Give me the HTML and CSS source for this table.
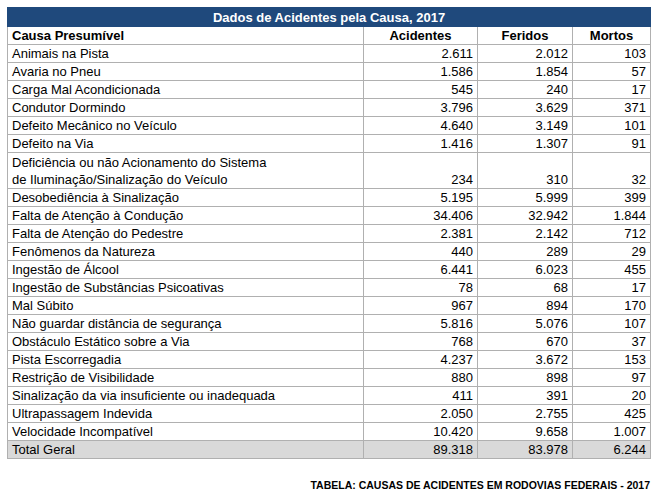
FILE: index.html
```html
<!DOCTYPE html>
<html lang="pt-BR">
<head>
<meta charset="utf-8">
<title>Dados de Acidentes pela Causa, 2017</title>
<link rel="stylesheet" href="styles.css">
</head>
<body>
<div class="page">
  <table class="data">
    <colgroup>
      <col class="c-cause">
      <col class="c-num1">
      <col class="c-num2">
      <col class="c-num3">
    </colgroup>
    <thead>
      <tr class="title-row"><th colspan="4">Dados de Acidentes pela Causa, 2017</th></tr>
      <tr class="head-row">
        <th class="left">Causa Presumível</th>
        <th>Acidentes</th>
        <th>Feridos</th>
        <th>Mortos</th>
      </tr>
    </thead>
    <tbody>
      <tr><td>Animais na Pista</td><td>2.611</td><td>2.012</td><td>103</td></tr>
      <tr><td>Avaria no Pneu</td><td>1.586</td><td>1.854</td><td>57</td></tr>
      <tr><td>Carga Mal Acondicionada</td><td>545</td><td>240</td><td>17</td></tr>
      <tr><td>Condutor Dormindo</td><td>3.796</td><td>3.629</td><td>371</td></tr>
      <tr><td>Defeito Mecânico no Veículo</td><td>4.640</td><td>3.149</td><td>101</td></tr>
      <tr><td>Defeito na Via</td><td>1.416</td><td>1.307</td><td>91</td></tr>
      <tr class="double"><td>Deficiência ou não Acionamento do Sistema<br>de Iluminação/Sinalização do Veículo</td><td>234</td><td>310</td><td>32</td></tr>
      <tr><td>Desobediência à Sinalização</td><td>5.195</td><td>5.999</td><td>399</td></tr>
      <tr><td>Falta de Atenção à Condução</td><td>34.406</td><td>32.942</td><td>1.844</td></tr>
      <tr><td>Falta de Atenção do Pedestre</td><td>2.381</td><td>2.142</td><td>712</td></tr>
      <tr><td>Fenômenos da Natureza</td><td>440</td><td>289</td><td>29</td></tr>
      <tr><td>Ingestão de Álcool</td><td>6.441</td><td>6.023</td><td>455</td></tr>
      <tr><td>Ingestão de Substâncias Psicoativas</td><td>78</td><td>68</td><td>17</td></tr>
      <tr><td>Mal Súbito</td><td>967</td><td>894</td><td>170</td></tr>
      <tr><td>Não guardar distância de segurança</td><td>5.816</td><td>5.076</td><td>107</td></tr>
      <tr><td>Obstáculo Estático sobre a Via</td><td>768</td><td>670</td><td>37</td></tr>
      <tr><td>Pista Escorregadia</td><td>4.237</td><td>3.672</td><td>153</td></tr>
      <tr><td>Restrição de Visibilidade</td><td>880</td><td>898</td><td>97</td></tr>
      <tr><td>Sinalização da via insuficiente ou inadequada</td><td>411</td><td>391</td><td>20</td></tr>
      <tr><td>Ultrapassagem Indevida</td><td>2.050</td><td>2.755</td><td>425</td></tr>
      <tr><td>Velocidade Incompatível</td><td>10.420</td><td>9.658</td><td>1.007</td></tr>
      <tr class="total"><td>Total Geral</td><td>89.318</td><td>83.978</td><td>6.244</td></tr>
    </tbody>
  </table>
  <p class="caption">TABELA: CAUSAS DE ACIDENTES EM RODOVIAS FEDERAIS - 2017</p>
</div>
</body>
</html>
```

FILE: styles.css
```css
html, body {
  margin: 0;
  padding: 0;
  background: #ffffff;
}

.page {
  padding: 7px 0 0 7px;
  width: 643px;
  font-family: "Liberation Sans", Arial, sans-serif;
  color: #000;
}

.data {
  border-collapse: collapse;
  table-layout: fixed;
  width: 643px;
  font-size: 13px;
  line-height: 17px;
}

.c-cause { width: 356px; }
.c-num1 { width: 114px; }
.c-num2 { width: 95px; }
.c-num3 { width: 78px; }

.title-row th {
  background: #1f497c;
  color: #fff;
  font-weight: bold;
  text-align: center;
  padding: 1px 0 0;
  height: 17px;
  border: 1px solid #1f497c;
  vertical-align: bottom;
}

.head-row th {
  font-weight: bold;
  text-align: center;
  border: 1px solid #b0b0b0;
  padding: 0 4px;
  vertical-align: bottom;
}

.head-row th.left {
  text-align: left;
}

.data td {
  border: 1px solid #b0b0b0;
  padding: 0 4px;
  text-align: right;
  vertical-align: bottom;
  white-space: nowrap;
}

.data td:first-child {
  text-align: left;
}

.double td {
  padding-top: 1px;
}

.total td {
  background: #d9d9d9;
}

.caption {
  margin: 20px 0 0;
  text-align: right;
  font-size: 10.5px;
  font-weight: bold;
  line-height: 12px;
}
```
